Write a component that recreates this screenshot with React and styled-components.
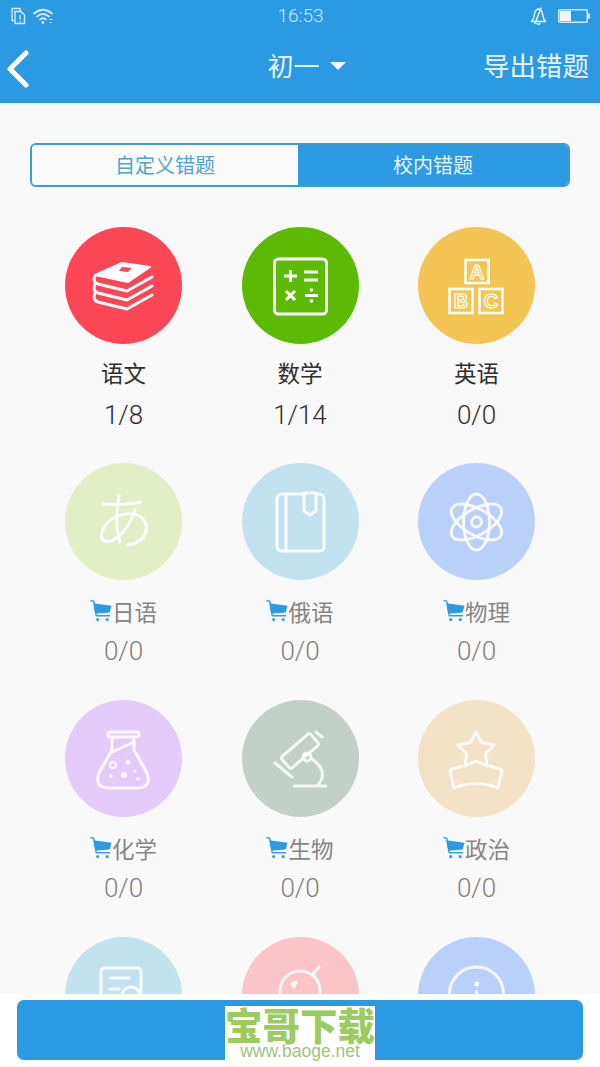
import styled, { createGlobalStyle } from "styled-components";

const BLUE = "#2b9ae2";
const CJK = `"Noto Sans CJK SC", "Noto Sans", sans-serif`;

const GlobalStyle = createGlobalStyle`
  html, body {
    margin: 0;
    padding: 0;
    background: #f9f9f9;
  }
  * {
    box-sizing: border-box;
  }
`;

const Page = styled.div`
  width: 600px;
  height: 1067px;
  display: flex;
  flex-direction: column;
  overflow: hidden;
  background: #f9f9f9;
  font-family: ${CJK};
`;

const Header = styled.header`
  flex: none;
  height: 103px;
  background: ${BLUE};
  color: #fff;
`;

const StatusBar = styled.div`
  height: 33px;
  display: grid;
  grid-template-columns: 1fr auto 1fr;
  align-items: center;
  padding: 0 10px 2px 11px;
`;

const StatusGroup = styled.div`
  display: flex;
  align-items: center;
  gap: ${(p) => p.$gap}px;
  justify-content: ${(p) => (p.$end ? "flex-end" : "flex-start")};
`;

const Clock = styled.span`
  font-family: Roboto, sans-serif;
  font-weight: 300;
  font-size: 19px;
  color: #d4eafa;
`;

const NavBar = styled.div`
  height: 64px;
  display: grid;
  grid-template-columns: 1fr auto 1fr;
  align-items: center;
  padding: 0 11px 0 6px;
`;

const BackButton = styled.div`
  display: flex;
  margin-top: 8px;
`;

const NavTitle = styled.div`
  display: flex;
  align-items: center;
  gap: 10px;
  padding-left: 18px;
  font-size: 26px;
  line-height: 36px;
  color: #e8f4fd;
`;

const Caret = styled.span`
  width: 0;
  height: 0;
  border-left: 8px solid transparent;
  border-right: 8px solid transparent;
  border-top: 8px solid #fff;
  margin-top: 2px;
`;

const NavAction = styled.div`
  justify-self: end;
  font-size: 26.5px;
  line-height: 36px;
  color: #e8f4fd;
`;

const Main = styled.main`
  flex: 1;
  min-height: 0;
  overflow: hidden;
  padding-top: 40px;
`;

const Tabs = styled.div`
  margin: 0 30px;
  height: 44px;
  display: grid;
  grid-template-columns: 266px 1fr;
  border: 2px solid #3a9fd0;
  border-radius: 6px;
  overflow: hidden;
`;

const Tab = styled.div`
  display: flex;
  align-items: center;
  justify-content: center;
  padding-bottom: 2px;
  font-size: 20px;
  background: ${(p) => (p.$active ? BLUE : "#fbfbfb")};
  color: ${(p) => (p.$active ? "#e8f4fd" : "#4fa5cc")};
`;

const SubjectGrid = styled.div`
  margin-top: 39.7px;
  padding: 0 35.25px;
  display: grid;
  grid-template-columns: repeat(3, 1fr);
  grid-auto-rows: 236.7px;
`;

const Subject = styled.div`
  display: flex;
  flex-direction: column;
  align-items: center;
`;

const Badge = styled.div`
  width: 117px;
  height: 117px;
  flex: none;
  border-radius: 50%;
  background: ${(p) => p.$color};
`;

const BadgeIcon = styled.svg`
  display: block;
  width: 117px;
  height: 117px;
`;

const SubjectName = styled.div`
  display: flex;
  align-items: center;
  margin-top: ${(p) => (p.$locked ? 16 : 13)}px;
  height: 30px;
  font-size: 22.5px;
  line-height: 30px;
  color: ${(p) => (p.$locked ? "#858585" : "#2e2e2e")};
`;

const Score = styled.div`
  margin-top: ${(p) => (p.$locked ? 10 : 13)}px;
  font-family: Roboto, sans-serif;
  font-weight: 300;
  font-size: 26px;
  line-height: 30px;
  color: ${(p) => (p.$locked ? "#808080" : "#2e2e2e")};
`;

const Footer = styled.footer`
  flex: none;
  height: 73px;
  padding: 6px 17px 7px;
  background: #fff;
`;

const SubmitBar = styled.div`
  height: 60px;
  display: flex;
  justify-content: center;
  background: ${BLUE};
  border-radius: 7px;
`;

const Watermark = styled.div`
  width: 150px;
  height: 54px;
  margin-top: 6px;
  background: #fff;
  display: flex;
  flex-direction: column;
  align-items: center;
`;

const WatermarkName = styled.div`
  font-weight: 900;
  font-size: 37.5px;
  line-height: 36px;
  white-space: nowrap;
  color: #9ccb62;
`;

const WatermarkUrl = styled.div`
  font-family: "Liberation Sans", sans-serif;
  font-size: 17.5px;
  line-height: 18px;
  color: #a2c480;
`;

const line = { fill: "none", stroke: "#fff", strokeWidth: 3, strokeLinecap: "round", strokeLinejoin: "round" };
const soft = { ...line, strokeOpacity: 0.85 };
const letter = {
  textAnchor: "middle",
  fontFamily: "Liberation Sans, sans-serif",
  fontWeight: 700,
  fontSize: 20,
  fill: "none",
  stroke: "#fff",
  strokeWidth: 1.2,
};

const SimIcon = () => (
  <svg width="15" height="18" viewBox="0 0 15 18" fill="none" stroke="#d4eafa" strokeWidth="1.4">
    <path d="M3 13.500H1V1.500H9V4" />
    <path d="M4 4.500H10L13.500 8V16.500H4Z" />
    <path d="M9 8V12.500M9 14V15.500" />
  </svg>
);

const WifiIcon = () => (
  <svg width="20" height="18" viewBox="0 0 20 18" fill="none" stroke="#d4eafa" strokeWidth="1.7" strokeLinecap="round">
    <path d="M1 6.500Q10 -1 19 6.500" />
    <path d="M4 9.500Q10 4.500 16 9.500" />
    <path d="M7 12.500Q10 10 13 12.500" />
    <circle cx="10" cy="15.500" r="1.400" fill="#d4eafa" stroke="none" />
    <path d="M17 12.500H19M17 15.500H18" strokeWidth="1.200" />
  </svg>
);

const BellOffIcon = () => (
  <svg width="17" height="18" viewBox="0 0 17 18" fill="none" stroke="#e8f4fd" strokeWidth="1.5" strokeLinejoin="round" strokeLinecap="round">
    <path d="M1.500 14.500Q4 12 4.500 7Q5 2.500 8.500 2Q12 2.500 12.500 7Q13 12 15.500 14.500Z" />
    <path d="M11 1L5 16.500" />
    <path d="M7 16.500Q8.500 18 10 16.500" />
  </svg>
);

const BatteryIcon = () => (
  <svg width="32" height="14" viewBox="0 0 32 14">
    <rect x="0.750" y="0.750" width="28.500" height="12.500" rx="1" fill="none" stroke="#d4eafa" strokeWidth="1.500" />
    <rect x="2" y="2" width="11" height="10" fill="#eef7fe" />
    <rect x="30" y="4.500" width="2" height="5" fill="#d4eafa" />
  </svg>
);

const BackIcon = () => (
  <svg width="24" height="38" viewBox="0 0 24 38" fill="none" stroke="#fff" strokeWidth="5" strokeLinecap="round" strokeLinejoin="round">
    <path d="M20 3L4 19L20 35" />
  </svg>
);

const CartIcon = () => (
  <svg width="22" height="24" viewBox="0 0 23 24">
    <path d="M0.500 1L4 2L6.500 17H21" fill="none" stroke="#3f9fd8" strokeWidth="1.500" />
    <path d="M3.500 4L22.500 6.500L20.500 13.500L5.500 15Z" fill={BLUE} />
    <circle cx="8" cy="21" r="1.700" fill="#3f9fd8" />
    <circle cx="18" cy="21" r="1.700" fill="#3f9fd8" />
  </svg>
);

// One drawing per subject, all on the 117 unit badge
const icons = {
  books: (
    <>
      <path d="M30 48L57 36L85 40L63 55Z" fill="#fff" stroke="#fff" strokeWidth="2" strokeLinejoin="round" />
      <path d="M57 40L67 41L63 45L54 44Z" fill="#fb4755" />
      <path d="M30 49Q27 55 33 57L62 64L87 50" {...line} />
      <path d="M30 57Q27 64 33 66L62 73L87 59" {...line} />
      <path d="M30 66Q27 73 33 75L62 82L87 68" {...line} />
    </>
  ),
  calculator: (
    <>
      <rect x="32.500" y="32" width="52" height="55" rx="4" {...line} />
      <path d="M42 49H55M48.500 43V55M62 45H76M62 53H76" {...line} strokeLinecap="butt" />
      <path d="M44 64L53 73M53 64L44 73M63 68.500H76" {...line} strokeLinecap="butt" />
      <circle cx="69.500" cy="63" r="1.800" fill="#fff" />
      <circle cx="69.500" cy="74" r="1.800" fill="#fff" />
    </>
  ),
  blocks: (
    <>
      <rect x="47.500" y="33" width="23" height="23" {...line} strokeWidth="2.500" strokeLinecap="butt" strokeLinejoin="miter" />
      <rect x="31.500" y="62" width="23" height="24" {...line} strokeWidth="2.500" strokeLinecap="butt" strokeLinejoin="miter" />
      <rect x="61.500" y="62" width="23" height="24" {...line} strokeWidth="2.500" strokeLinecap="butt" strokeLinejoin="miter" />
      <text x="59" y="51.500" {...letter}>A</text>
      <text x="43" y="81" {...letter}>B</text>
      <text x="73" y="81" {...letter}>C</text>
    </>
  ),
  kana: (
    <text
      x="58.500"
      y="81"
      textAnchor="middle"
      fontFamily="Noto Sans CJK JP, sans-serif"
      fontWeight="300"
      fontSize="62"
      fill="#fff"
      fillOpacity="0.9"
    >
      あ
    </text>
  ),
  book: (
    <>
      <path d="M62 31H40Q35 31 35 36V82Q35 88 40 88H77Q82 88 82 83V36Q82 31 77 31H74" {...soft} />
      <path d="M44 31V88" {...soft} />
      <path d="M62 30V48L68 52L74 48V30Z" {...soft} />
    </>
  ),
  atom: (
    <>
      <ellipse cx="58.500" cy="59" rx="28" ry="13" transform="rotate(90 58.500 59)" {...soft} />
      <ellipse cx="58.500" cy="59" rx="28" ry="13" transform="rotate(30 58.500 59)" {...soft} />
      <ellipse cx="58.500" cy="59" rx="28" ry="13" transform="rotate(150 58.500 59)" {...soft} />
      <circle cx="58.500" cy="59" r="5" {...soft} />
    </>
  ),
  flask: (
    <>
      <rect x="43" y="32" width="31" height="5" rx="2.500" {...soft} />
      <path d="M47 37V50L34 73Q29 88 44 88H72Q87 88 82 73L69 50V37" {...soft} />
      <path d="M47 52L69 42" {...soft} />
      <circle cx="48" cy="65" r="3" {...soft} strokeWidth="2" />
      <circle cx="63" cy="62" r="2.500" fill="#fff" fillOpacity="0.85" />
      <circle cx="59" cy="75" r="3" fill="#fff" fillOpacity="0.85" />
      <circle cx="46" cy="76" r="1.800" fill="#fff" fillOpacity="0.85" />
      <circle cx="70" cy="71" r="1.500" fill="#fff" fillOpacity="0.85" />
      <circle cx="73" cy="79" r="1.800" fill="#fff" fillOpacity="0.85" />
    </>
  ),
  microscope: (
    <>
      <rect x="39" y="43.500" width="38" height="15" rx="2" transform="rotate(-41 58 51)" {...soft} />
      <path d="M74 32L80 37M33 63L50 77" {...soft} />
      <circle cx="65" cy="57" r="4" {...soft} />
      <path d="M70 59Q88 72 75 86M52 86H84" {...soft} />
    </>
  ),
  star: (
    <>
      <path d="M58 32L63.500 42.500L76 45L67.500 54L69 66L58 61L47 66L48.500 54L40 45L52.500 42.500Z" {...soft} />
      <path d="M44 66L32 70L36 88Q58 79 80 88L84 70L72 66" {...soft} />
    </>
  ),
  note: (
    <>
      <path d="M36 78V35Q36 31 40 31H72Q76 31 76 35V78" {...soft} />
      <path d="M45 41H64M45 52H54" {...soft} />
      <circle cx="66" cy="59" r="9" {...soft} />
    </>
  ),
  compass: (
    <>
      <circle cx="58" cy="54" r="20" {...soft} />
      <path d="M77 30L71 37L76 45" {...soft} />
      <path d="M50 47L54 45L52 50Z" {...soft} />
    </>
  ),
  globe: (
    <>
      <circle cx="58.500" cy="57" r="27" {...soft} />
      <circle cx="58.500" cy="47" r="2.500" fill="#fff" />
      <path d="M58.500 54V68" {...soft} />
    </>
  ),
};

// The last row sits behind the footer, only its badges ever show
const subjects = [
  { name: "语文", score: "1/8", color: "#fb4755", icon: "books" },
  { name: "数学", score: "1/14", color: "#5cb904", icon: "calculator" },
  { name: "英语", score: "0/0", color: "#f4c553", icon: "blocks" },
  { name: "日语", score: "0/0", color: "#e2eec6", icon: "kana", locked: true },
  { name: "俄语", score: "0/0", color: "#c3e2f0", icon: "book", locked: true },
  { name: "物理", score: "0/0", color: "#b9d1f9", icon: "atom", locked: true },
  { name: "化学", score: "0/0", color: "#e3ccf9", icon: "flask", locked: true },
  { name: "生物", score: "0/0", color: "#c3d0c8", icon: "microscope", locked: true },
  { name: "政治", score: "0/0", color: "#f3e2c6", icon: "star", locked: true },
  { color: "#c3e2f0", icon: "note" },
  { color: "#fbc4c8", icon: "compass" },
  { color: "#b9d1f9", icon: "globe" },
];

const App = () => (
  <Page>
    <GlobalStyle />
    <Header>
      <StatusBar>
        <StatusGroup $gap={7}>
          <SimIcon />
          <WifiIcon />
        </StatusGroup>
        <Clock>16:53</Clock>
        <StatusGroup $gap={11} $end>
          <BellOffIcon />
          <BatteryIcon />
        </StatusGroup>
      </StatusBar>
      <NavBar>
        <BackButton>
          <BackIcon />
        </BackButton>
        <NavTitle>
          初一
          <Caret />
        </NavTitle>
        <NavAction>导出错题</NavAction>
      </NavBar>
    </Header>
    <Main>
      <Tabs>
        <Tab>自定义错题</Tab>
        <Tab $active>校内错题</Tab>
      </Tabs>
      <SubjectGrid>
        {subjects.map((subject) => (
          <Subject key={subject.icon}>
            <Badge $color={subject.color}>
              <BadgeIcon viewBox="0 0 117 117">{icons[subject.icon]}</BadgeIcon>
            </Badge>
            {subject.name && (
              <>
                <SubjectName $locked={subject.locked}>
                  {subject.locked && <CartIcon />}
                  {subject.name}
                </SubjectName>
                <Score $locked={subject.locked}>{subject.score}</Score>
              </>
            )}
          </Subject>
        ))}
      </SubjectGrid>
    </Main>
    <Footer>
      <SubmitBar>
        <Watermark>
          <WatermarkName>宝哥下载</WatermarkName>
          <WatermarkUrl>www.baoge.net</WatermarkUrl>
        </Watermark>
      </SubmitBar>
    </Footer>
  </Page>
);

export default App;
